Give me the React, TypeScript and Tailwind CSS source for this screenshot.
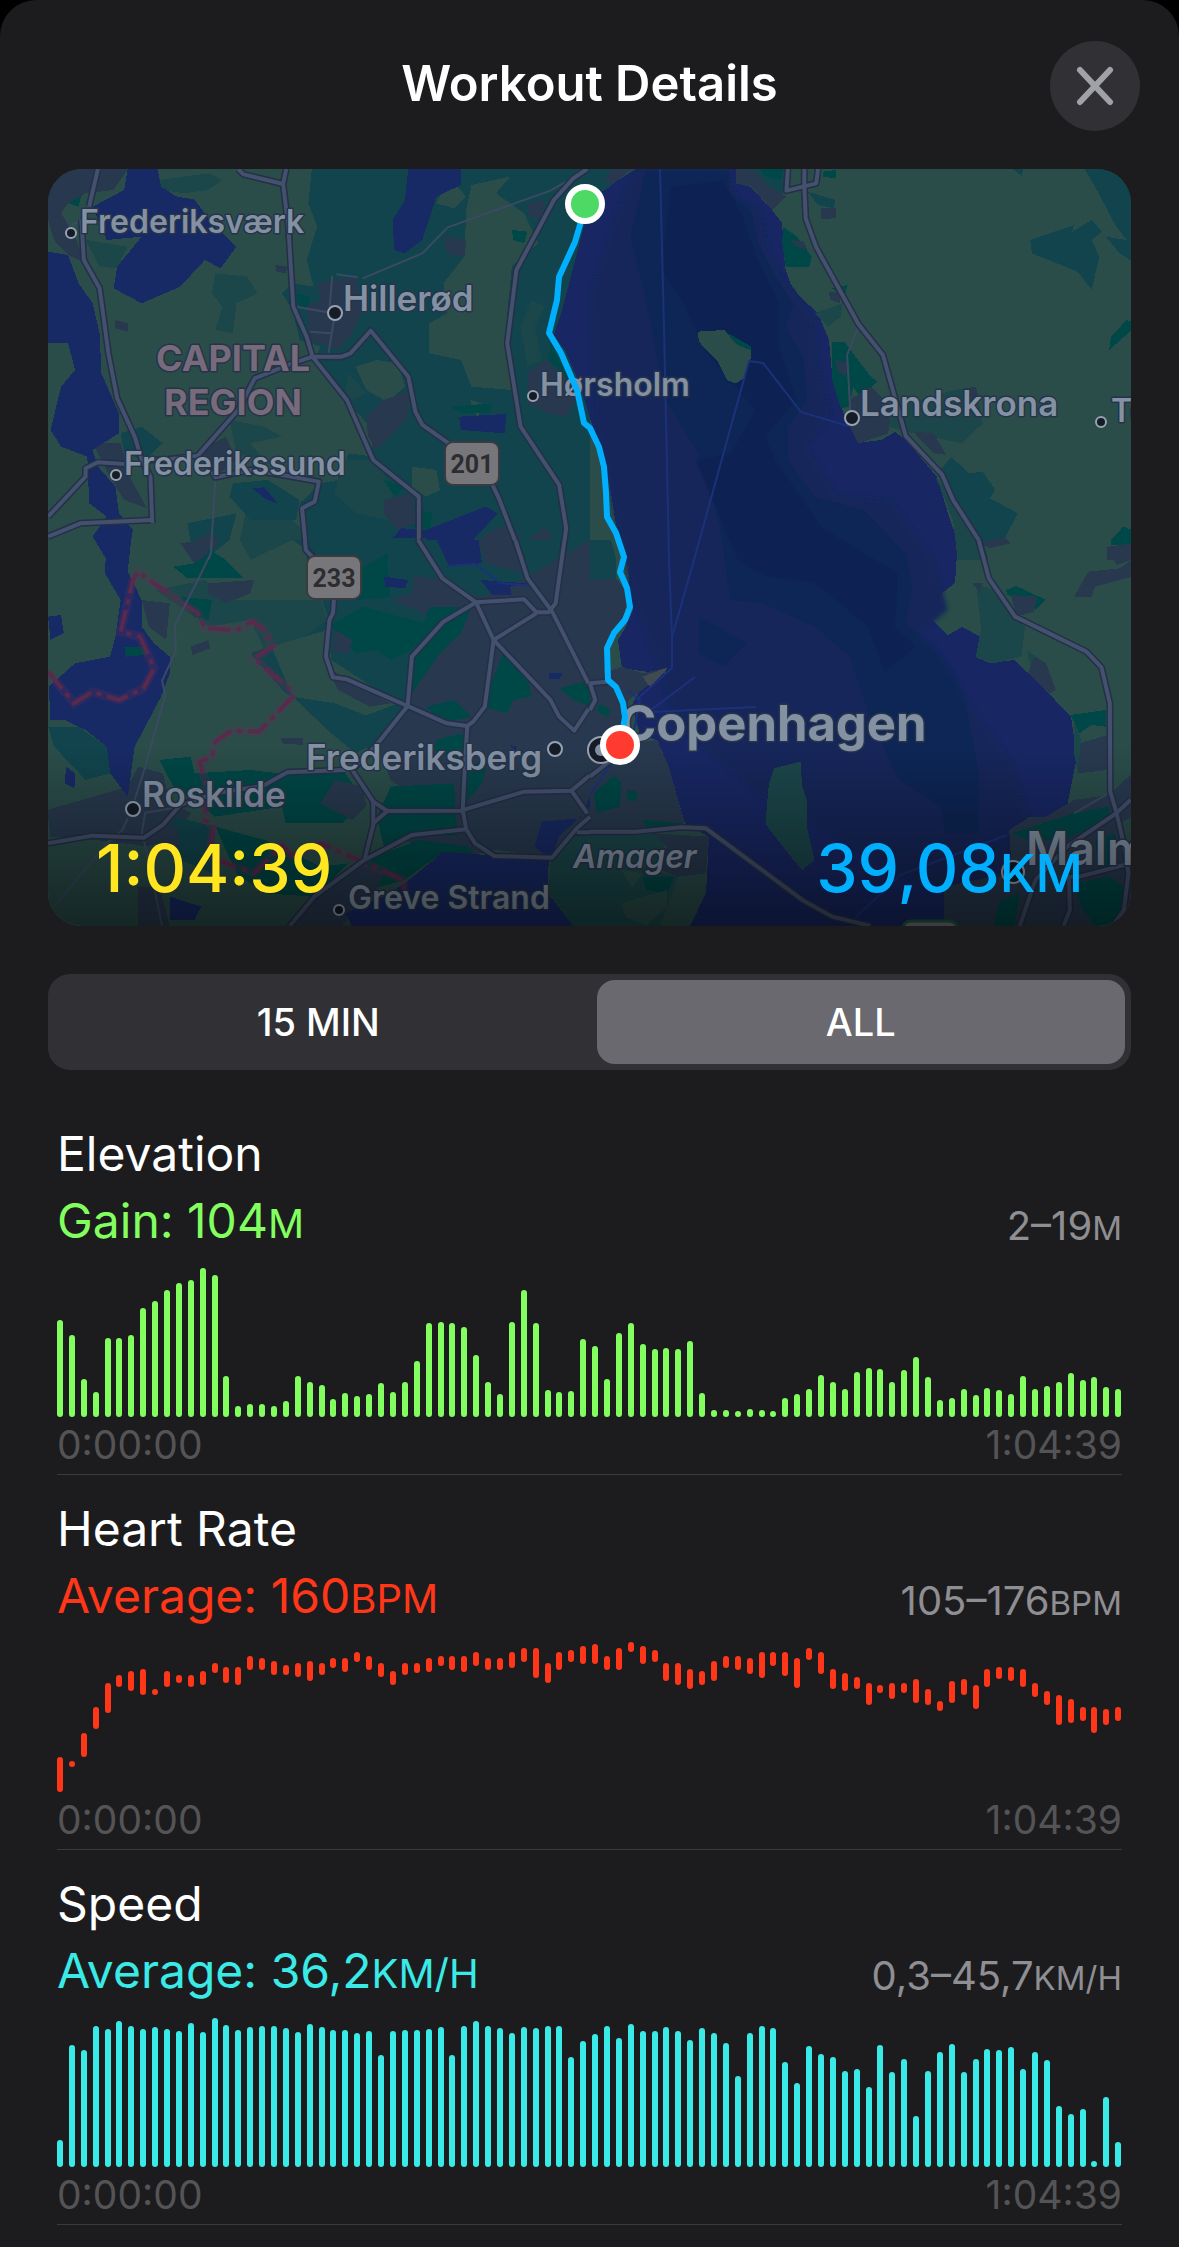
import React, { useState } from "react";

type Range = [offset: number, height: number];

const CHART_HEIGHT = 150;

const fromBase = (heights: number[]): Range[] =>
  heights.map((h) => [CHART_HEIGHT - h, h]);

const elevation = fromBase([
  97, 82, 38, 25, 79, 79, 82, 109, 116, 127, 134, 137, 149, 142, 41, 11, 13, 13, 11, 16,
  41, 35, 32, 18, 24, 21, 23, 34, 25, 35, 56, 94, 95, 94, 90, 62, 35, 23, 95, 127,
  94, 27, 25, 26, 78, 71, 38, 84, 94, 73, 68, 69, 68, 76, 24, 7, 7, 6, 8, 7,
  6, 19, 23, 28, 42, 35, 28, 45, 49, 48, 35, 47, 60, 40, 17, 19, 28, 22, 29, 27,
  23, 41, 28, 31, 35, 44, 37, 40, 30, 28,
]);

const speed = fromBase([
  27, 122, 117, 141, 138, 146, 141, 138, 140, 138, 136, 144, 135, 149, 142, 137, 140, 141, 141, 139,
  135, 143, 140, 137, 137, 134, 136, 112, 136, 137, 137, 138, 140, 112, 141, 146, 141, 139, 134, 140,
  139, 141, 141, 110, 126, 133, 141, 129, 143, 136, 136, 140, 136, 127, 139, 134, 124, 91, 134, 141,
  139, 105, 84, 121, 113, 110, 96, 98, 80, 122, 95, 108, 51, 96, 115, 123, 95, 108, 118, 117,
  120, 98, 115, 107, 61, 53, 58, 6, 70, 25,
]);

const heartRate: Range[] = [
  [115, 35], [119, 6], [91, 24], [65, 22], [41, 30], [33, 12], [29, 20], [27, 26], [47, 6], [29, 16],
  [33, 8], [33, 12], [29, 14], [21, 10], [25, 16], [25, 18], [14, 14], [16, 12], [19, 14], [23, 10],
  [21, 14], [19, 20], [21, 12], [16, 10], [16, 14], [10, 10], [14, 14], [21, 14], [29, 14], [21, 12],
  [21, 10], [16, 14], [14, 10], [14, 14], [14, 16], [10, 14], [16, 12], [16, 12], [10, 16], [6, 14],
  [6, 30], [21, 20], [10, 18], [8, 12], [4, 18], [2, 20], [14, 14], [6, 22], [0, 10], [4, 18],
  [8, 12], [21, 18], [21, 22], [27, 20], [29, 14], [19, 20], [14, 12], [14, 14], [16, 16], [10, 26],
  [10, 14], [10, 24], [16, 30], [6, 12], [10, 22], [27, 20], [31, 18], [35, 12], [41, 22], [43, 8],
  [41, 16], [41, 10], [37, 24], [47, 16], [59, 10], [39, 22], [37, 16], [43, 24], [27, 18], [25, 12],
  [25, 14], [27, 18], [41, 14], [49, 14], [53, 30], [57, 24], [65, 14], [65, 26], [67, 16], [65, 14],
];

/* ------------------------------------------------------------------ map */

const FARM = "#2a4d4a";
const FOREST = "#11444d";
const MIX = "#1b474b";
const PARK = "#004747";
const TOWN = "#28394f";
const LAKE = "#182a66";

type Patch = [fill: string, points: string];

interface Tile {
  x: number;
  y: number;
  patches: Patch[];
  thin: string[];
  roads: string[];
}

const northWest: Tile = {
  x: 40,
  y: 160,
  patches: [
    [FOREST, "775,27 1568,27 1568,1200 780,1200 745,1110 740,1030 800,970 850,960 880,880 950,890 940,800 880,730 830,650 780,600 800,560 740,540 720,450 690,400 720,370 780,380 760,300 790,200 765,130"],
    [MIX, "340,60 480,40 520,60 480,90 410,100 350,90"],
    [MIX, "500,340 590,350 620,400 560,430 550,520 500,510 520,440 490,400"],
    [MIX, "130,240 250,260 230,300 260,330 170,320"],
    [MIX, "540,780 640,800 690,830 600,850 640,900 560,880"],
    [MIX, "590,1040 700,1060 760,1120 780,1200 600,1200 570,1140"],
    [FOREST, "550,970 650,960 740,1020 730,1080 600,1080 540,1010"],
    [FOREST, "23,27 60,30 40,90 23,100"],
    [FOREST, "230,820 290,800 350,850 300,900 240,880"],
    [FOREST, "420,1090 560,1060 540,1140 470,1200 430,1150"],
    [FARM, "1230,75 1340,50 1300,100 1380,160 1420,250 1345,320 1325,540 1345,690 1230,680 1200,600 1110,580 1110,490 1160,460 1150,370 1210,290 1215,150"],
    [FARM, "1150,90 1190,80 1215,110 1180,145 1130,130"],
    [FARM, "900,620 960,600 1020,610 1042,680 990,725 930,690"],
    [FARM, "1060,920 1130,930 1140,990 1100,1010 1060,980"],
    [FARM, "1230,720 1260,730 1250,770 1230,750"],
    [MIX, "1400,420 1440,440 1410,500 1430,600 1390,620 1370,500"],
    [MIX, "860,900 960,900 1010,1000 990,1080 900,1060 840,1000"],
    [MIX, "880,640 930,700 890,720 870,690"],
    [PARK, "85,95 120,100 110,140 80,130"],
    [PARK, "730,400 770,410 765,440 740,440"],
    [PARK, "1345,210 1390,215 1380,250 1350,240"],
    [PARK, "1170,740 1290,730 1280,760 1200,760"],
    [PARK, "1460,530 1500,600 1540,720 1490,640 1450,600"],
    [PARK, "1060,1040 1120,1060 1110,1110 1060,1100"],
    [PARK, "980,960 1040,980 1010,1010"],
    [TOWN, "23,27 250,27 210,90 130,100 80,130 60,160 100,230 130,310 80,285 40,240 23,180"],
    [TOWN, "790,370 900,350 920,450 890,520 850,570 770,540 760,440 800,420"],
    [TOWN, "150,850 230,850 260,960 305,1045 240,1020 200,950"],
    [TOWN, "470,860 530,830 560,900 500,950 460,920"],
    [TOWN, "930,770 980,720 1060,690 1045,780 960,870 935,830"],
    [TOWN, "1150,230 1215,240 1210,290 1160,280"],
    [TOWN, "1390,640 1440,600 1540,700 1500,770 1450,760 1390,730"],
    [TOWN, "980,1020 1065,1000 1070,1090 1020,1110 980,1060"],
    [TOWN, "215,480 250,490 250,515 215,505"],
    [TOWN, "1390,130 1440,120 1430,175 1395,170"],
    [TOWN, "670,315 705,320 700,340 675,335"],
    [TOWN, "1270,1120 1340,1090 1380,1150 1440,1100 1500,1200 1240,1200"],
    [TOWN, "430,1150 480,1120 510,1140 480,1200 430,1200"],
    [LAKE, "250,27 335,27 345,80 390,110 440,118 490,190 560,260 515,325 470,300 400,380 290,430 210,385 220,320 290,230 190,240 150,140 240,90"],
    [LAKE, "1050,27 1200,27 1200,75 1130,110 1090,240 1040,280 1010,270 1005,180 1040,120"],
    [LAKE, "23,275 80,285 110,370 150,430 170,520 175,640 225,760 225,820 150,870 165,920 215,980 225,1060 265,1110 250,1200 190,1200 150,1130 190,1070 140,1030 135,890 60,860 30,810 60,680 100,630 80,550 23,550"],
    [LAKE, "1195,770 1330,762 1325,820 1200,810"],
    [LAKE, "605,985 640,982 680,1033 640,1015"],
    [LAKE, "1005,1135 1030,1105 1100,1110 1270,1040 1305,1060 1235,1140 1265,1200 1135,1200 1100,1135"],
  ],
  thin: [
    "1500,65 1455,92 1162,202 1090,280 920,355",
    "845,343 905,352",
    "833,348 826,440",
    "730,440 820,457",
    "838,480 822,580",
    "770,515 830,520",
    "500,952 487,1180 480,1200",
    "90,195 118,180",
  ],
  roads: [
    "165,27 140,140",
    "118,180 125,300 170,385 195,580 220,715 270,830 290,900 315,950 320,1090",
    "23,1070 130,950 130,925 165,907 240,912",
    "23,1130 115,1090 320,1080",
    "565,27 580,43 693,72",
    "702,27 693,72 708,200 722,440 760,530 777,590 875,720 950,900 1080,1010 1080,1145 1115,1200",
    "777,590 715,612 612,655 565,750 450,887 350,900 290,900",
    "777,590 860,590 885,580 943,512 1050,650 1070,755 1090,795 1165,850",
    "1290,975 1310,1020 1375,1200",
    "1560,27 1520,55 1465,120 1358,330 1332,550 1370,800 1480,975 1500,1105 1488,1200",
    "490,935 500,952 600,930 690,945 795,965 783,1025 747,1045 758,1165 785,1200",
  ],
};

const northEast: Tile = {
  x: 590,
  y: 160,
  patches: [
    [FOREST, "415,27 560,27 555,90 520,150 460,80"],
    [TOWN, "415,27 470,30 500,70 560,110 520,150 460,80 415,70"],
    [PARK, "485,27 550,27 545,60 500,50"],
    [PARK, "665,35 700,30 700,55 665,50"],
    [PARK, "550,200 590,230 632,290 625,320 558,320 548,250"],
    [TOWN, "570,240 610,245 620,270 590,260"],
    [FOREST, "620,95 700,120 695,145 650,135"],
    [TOWN, "660,145 700,145 700,175 657,177"],
    [MIX, "640,460 720,430 715,470 680,500"],
    [TOWN, "680,395 715,395 712,430 685,418"],
    [PARK, "690,385 735,375 725,410"],
    [PARK, "690,545 725,545 800,650 820,665 770,710 750,680 740,740 715,745 690,660"],
    [TOWN, "700,600 735,610 730,650 705,630"],
    [TOWN, "740,720 800,680 860,740 850,820 765,850 735,790"],
    [MIX, "1040,690 1100,680 1120,790 1060,850 900,815 850,800 870,740"],
    [TOWN, "1060,690 1100,680 1110,720 1070,720"],
    [TOWN, "920,815 980,820 1015,885 980,880"],
    [FOREST, "990,940 1030,890 1080,940 1120,935 1155,990 1140,1015 1220,1060 1180,1140 1110,1160 1060,1050"],
    [MIX, "985,950 1030,1010 1110,1140 1125,1200 1048,1200 1035,1080"],
    [TOWN, "1110,1150 1180,1130 1200,1150 1140,1165"],
    [FOREST, "1255,240 1380,195 1375,215 1430,180 1460,215 1430,240 1452,290 1430,390 1390,335 1260,280"],
    [FOREST, "1410,27 1568,27 1568,320 1510,280 1470,230 1530,240 1500,200 1450,100"],
    [FOREST, "1205,27 1235,27 1230,48"],
    [PARK, "1480,570 1485,530 1530,480 1545,485 1545,510"],
    [PARK, "1485,1140 1520,1100 1545,1110 1545,1160 1485,1155"],
    [TOWN, "1475,1160 1545,1155 1545,1200 1475,1200"],
    [FARM, "308,515 385,510 400,530 460,565 460,590 440,655 415,670 390,660 365,605 310,545"],
    [PARK, "385,515 460,560 460,572 420,555"],
    [FOREST, "0,27 120,27 50,85 10,110 0,100"],
    [TOWN, "60,27 120,27 60,75 45,60"],
  ],
  thin: ["765,500 733,585 742,755"],
  roads: [
    "564,27 560,92 645,70 650,27",
    "611,27 611,80 615,175 645,262 765,492 835,585 900,828 1003,943 1035,1020 1108,1140 1125,1200",
  ],
};

const southWest: Tile = {
  x: 40,
  y: 540,
  patches: [
    [FOREST, "600,60 720,0 1568,0 1568,560 1200,560 960,640 830,570 820,520 700,460 600,340 700,300 820,230 800,170"],
    [FARM, "600,60 720,0 760,30 760,170 700,190 640,160"],
    [MIX, "330,150 470,120 560,180 800,180 820,240 740,300 640,330 600,240 480,260"],
    [FARM, "660,320 820,270 830,360 1020,490 920,530 820,500 720,470"],
    [TOWN, "1180,150 1260,170 1390,110 1568,0 1568,950 1460,950 1300,930 1150,960 1000,880 1100,800 1000,720 960,620 1050,500 1060,340 1150,240"],
    [TOWN, "1020,100 1150,120 1230,180 1140,240 1000,180"],
    [TOWN, "1250,0 1360,0 1380,100 1270,70"],
    [PARK, "830,255 920,200 1100,250 1060,330 1000,360 960,330 900,340 850,290"],
    [TOWN, "840,270 890,300 880,340 835,340"],
    [PARK, "1110,200 1230,200 1200,280 1140,340 1060,460 1050,380 1080,290"],
    [PARK, "1320,340 1390,400 1400,470 1350,480 1330,520 1260,500"],
    [PARK, "1100,500 1180,480 1230,530 1150,550"],
    [PARK, "1480,445 1568,420 1568,500 1520,480"],
    [PARK, "1130,600 1200,580 1230,610 1200,660 1120,630"],
    [PARK, "1220,680 1280,650 1260,730 1210,790"],
    [TOWN, "810,370 870,420 1000,490 940,500 850,450"],
    [PARK, "870,110 990,40 1010,170 900,180"],
    [FOREST, "990,60 1070,80 1060,160 1000,180"],
    [PARK, "380,80 440,70 470,20 530,60 580,115 420,115"],
    [TOWN, "480,130 610,120 600,160 530,190 480,160"],
    [TOWN, "400,10 470,0 480,40 440,70"],
    [TOWN, "430,320 480,300 485,325 435,345"],
    [PARK, "400,170 490,180 480,240 440,230"],
    [PARK, "230,290 290,280 310,340 240,350"],
    [TOWN, "290,180 370,190 360,300 310,260"],
    [FOREST, "720,470 840,490 940,530 980,510 970,600 900,640 830,580"],
    [FOREST, "23,560 110,560 190,620 200,700 130,720 40,620"],
    [TOWN, "687,595 750,595 750,615 690,610"],
    [PARK, "340,660 430,650 440,700 600,690 680,700 700,690 870,700 930,790 860,850 700,850 690,800 500,830 380,740"],
    [TOWN, "840,720 920,740 930,800 890,840 800,790"],
    [TOWN, "20,810 250,740 280,680 350,700 370,780 430,820 380,900 300,920 160,900 30,890"],
    [FARM, "23,920 240,910 440,940 760,850 940,850 920,960 780,1070 640,1158 23,1158"],
    [FOREST, "380,830 500,860 490,1000 400,960 370,920"],
    [PARK, "500,860 640,900 800,980 880,970 780,1070 640,1060 560,1000"],
    [PARK, "1000,740 1180,730 1190,890 1060,880 980,920 960,830"],
    [PARK, "930,960 1080,900 1220,920 1240,950 1150,935 1040,1020 870,1070"],
    [TOWN, "770,1080 920,970 980,1000 960,1050 860,1158 700,1158"],
    [TOWN, "280,1040 340,1040 370,1158 280,1158"],
    [LAKE, "370,1070 460,1100 440,1140 370,1140"],
    [TOWN, "340,880 390,860 400,920 350,920"],
    [LAKE, "190,0 260,0 250,95 290,180 290,260 325,310 370,350 370,400 345,470 310,540 270,620 250,770 200,700 190,620 130,570 70,540 30,540 25,440 100,370 200,350 215,290 230,180 185,100"],
    [PARK, "240,320 290,320 300,345 245,350"],
    [LAKE, "23,230 60,225 68,280 30,300"],
    [LAKE, "75,680 100,700 98,745 70,730"],
    [LAKE, "980,110 1050,120 1040,145 985,140"],
    [LAKE, "1130,0 1250,0 1260,70 1165,75"],
    [LAKE, "1255,120 1390,130 1340,140 1345,165 1290,165"],
    [LAKE, "1450,400 1492,398 1480,418 1452,418"],
    [LAKE, "1340,615 1360,620 1355,635"],
    [LAKE, "1430,845 1540,835 1568,770 1568,800 1480,890 1455,960 1410,920"],
    [LAKE, "1040,1030 1150,935 1450,960 1448,1060 1520,1158 890,1158 870,1120 980,1070"],
    [MIX, "1500,900 1568,880 1568,1158 1520,1158 1450,1060 1455,960"],
  ],
  thin: [
    "490,0 487,40 450,120 385,255 387,335 348,422 357,465 300,680 270,780",
    "250,835 235,870 190,910 40,1100",
    "400,800 300,818 290,880 305,940 348,1158",
  ],
  roads: [
    "23,910 150,887 297,893 350,855 400,795 500,760 635,738 705,697 870,690",
    "755,0 758,30 780,55",
    "838,180 835,220 825,240 815,350 835,412 875,418 1048,498 1160,550 1218,558 1235,545 1268,500 1293,300 1243,187 1147,115 1078,0",
    "1048,498 1060,350 1150,245 1243,187 1380,178 1415,217 1450,217 1470,190 1495,0",
    "1355,0 1390,115 1460,215 1568,440",
    "1293,300 1415,220",
    "1293,300 1455,480 1480,530 1523,572 1568,500",
    "1048,498 955,620 890,690 950,785 990,813 1200,812 1380,755 1515,752 1568,705",
    "950,785 950,855 925,960 782,1070 712,1158",
    "950,850 990,813",
    "1218,558 1210,700 1205,810 1215,868 1240,910 1295,948 1460,953 1530,865 1568,830",
    "925,960 1060,885 1215,868",
    "1515,752 1560,820",
    "1530,877 1568,877",
  ],
};

const southEast: Tile = {
  x: 590,
  y: 540,
  patches: [
    [FOREST, "0,0 60,0 75,60 75,115 0,120"],
    [TOWN, "0,120 75,115 105,160 100,220 50,300 40,400 90,380 150,400 220,383 150,450 110,480 100,560 130,610 190,600 225,680 250,780 270,850 0,880"],
    ["#3f4b50", "150,410 220,383 215,395 170,440"],
    [PARK, "25,490 60,510 50,530 20,515"],
    [PARK, "10,760 70,705 90,730 85,800 20,820"],
    [PARK, "105,750 135,755 135,785 105,780"],
    [PARK, "150,840 265,850 250,865 160,860"],
    [MIX, "0,880 180,880 220,900 180,990 250,1010 200,1158 0,1158"],
    [PARK, "150,1010 240,1010 220,1060 160,1050"],
    [FARM, "90,1090 220,1050 220,1100 160,1158 100,1130"],
    [FARM, "90,990 150,1000 120,1045"],
    [TOWN, "180,880 340,890 330,1000 250,1010 180,980 220,920"],
    [MIX, "525,685 600,665 605,740 618,780 618,860 640,960 605,990 580,960 520,880 500,850 510,730"],
    [MIX, "1048,0 1100,0 1125,60 1060,60 1045,40"],
    [MIX, "1100,130 1150,150 1240,260 1230,350 1150,370 1100,350 1115,265"],
    [PARK, "1185,150 1215,138 1300,180 1270,210 1230,180 1190,165"],
    [TOWN, "1200,165 1275,170 1265,215 1215,230"],
    [TOWN, "1090,130 1120,130 1110,155"],
    [TOWN, "1380,170 1420,95 1510,85 1545,60 1545,110 1440,140 1430,170"],
    [TOWN, "1480,20 1545,10 1545,60 1500,75"],
    [MIX, "1245,330 1300,370 1260,400"],
    [TOWN, "1265,350 1300,370 1328,450 1310,460 1250,400"],
    [PARK, "1370,525 1470,510 1470,560 1430,555 1395,580"],
    [TOWN, "1395,610 1475,585 1475,690 1390,700"],
    [MIX, "1380,540 1400,600 1390,700 1380,640"],
    [TOWN, "1300,830 1380,780 1480,765 1545,700 1545,1158 1010,1158 1010,1040 1170,1010 1200,950 1195,870 1255,830"],
    [PARK, "1200,880 1380,820 1480,800 1480,840 1350,900 1250,900"],
    [PARK, "1170,1080 1225,1060 1210,1158 1150,1158"],
    [PARK, "1380,1030 1480,1010 1520,1040 1510,1158 1440,1158 1400,1100"],
    [PARK, "1440,900 1500,880 1500,980 1450,990"],
    [FARM, "1510,850 1545,830 1545,940"],
  ],
  thin: ["1475,762 1380,820"],
  roads: [
    "1108,0 1137,115 1212,230 1415,335 1458,382 1482,490 1483,755 1500,815 1520,905 1535,1000 1522,1110 1490,1158",
    "1541,780 1500,820 1360,920 1270,1020 1225,1158",
    "1541,970 1395,1010 1365,1010 1368,1110 1350,1158",
    "0,875 130,875 260,862 330,865 605,1080 690,1130 800,1158",
    "0,430 50,425",
    "0,430 15,480 0,510",
    "0,710 60,660",
  ],
};

const regionBorder =
  "23,395 97,490 150,455 225,480 295,445 325,385 285,290 230,275 265,120 278,95 400,185 450,220 470,265 560,270 605,245 635,265 665,320 610,355 715,450 720,470 625,575 545,572 500,605 490,650 455,665 475,740 470,840 495,860 480,950 610,1000 690,915 720,950 800,910 1035,1020 1040,1050";

const route =
  "583,210 580,225 575,242 559,277 557,300 549,333 561,353 577,390 584,423 590,428 599,447 604,467 606,493 607,517 616,533 624,557 620,572 627,588 630,607 625,620 614,633 607,648 608,680 616,687 623,703 625,717 621,740";

const sound =
  "636,169 610,185 592,200 583,230 570,280 562,310 554,335 566,352 580,385 592,425 606,455 612,500 616,525 628,550 630,600 633,610 625,628 618,640 620,655 622,668 648,672 667,668 640,690 632,705 640,735 657,740 669,767 678,800 685,823 709,837 706,893 690,926 944,926 944,887 1000,875 1009,830 1028,817 1046,817 1067,807 1077,757 1071,717 1039,683 1014,660 990,663 976,657 981,637 962,627 948,635 930,618 934,600 955,583 958,540 951,523 937,477 906,440 895,432 881,440 858,443 848,423 841,407 832,373 829,340 818,313 800,297 790,283 785,267 782,223 772,210 751,187 736,183 736,169";

const tileScale = "scale(0.3508 0.3333)";

const place = (t: { x: number; y: number }) => `translate(${t.x} ${t.y}) ${tileScale}`;

function Land({ tile }: { tile: Tile }) {
  return (
    <g transform={place(tile)}>
      {tile.patches.map(([fill, points], i) => (
        <polygon key={i} points={points} fill={fill} />
      ))}
    </g>
  );
}

function Roads({ tile }: { tile: Tile }) {
  return (
    <g transform={place(tile)} fill="none" strokeLinejoin="round">
      {tile.thin.map((p) => (
        <polyline key={p} points={p} stroke="#3b4a62" strokeWidth={2} vectorEffect="non-scaling-stroke" />
      ))}
      {tile.roads.map((p) => (
        <polyline key={p} points={p} stroke="#252f46" strokeWidth={7} vectorEffect="non-scaling-stroke" />
      ))}
      {tile.roads.map((p) => (
        <polyline key={p} points={p} stroke="#43516e" strokeWidth={4} vectorEffect="non-scaling-stroke" />
      ))}
    </g>
  );
}

interface Place {
  name: string;
  x: number;
  y: number;
  size: number;
  dot?: [number, number, number];
}

const places: Place[] = [
  { name: "Frederiksværk", x: 80, y: 233, size: 32, dot: [71, 233, 5] },
  { name: "Hillerød", x: 343, y: 311, size: 35, dot: [335, 313, 7] },
  { name: "Hørsholm", x: 540, y: 396, size: 32, dot: [533, 396, 5] },
  { name: "Frederikssund", x: 124, y: 475, size: 32, dot: [116, 475, 5] },
  { name: "Landskrona", x: 860, y: 416, size: 35, dot: [852, 418, 7] },
  { name: "To", x: 1111, y: 422, size: 32, dot: [1101, 422, 5] },
  { name: "Frederiksberg", x: 306, y: 770, size: 35, dot: [555, 749, 7] },
  { name: "Roskilde", x: 142, y: 807, size: 35, dot: [133, 809, 7] },
  { name: "Greve Strand", x: 348, y: 909, size: 32, dot: [339, 910, 5] },
];

function Shield({ x, y, label }: { x: number; y: number; label: string }) {
  return (
    <g>
      <rect x={x} y={y} width={56} height={45} rx={9} fill="#3a3b3f" />
      <rect x={x + 2} y={y + 2} width={52} height={41} rx={7} fill="#77777b" />
      <text x={x + 28} y={y + 32} textAnchor="middle" className="fill-[#2c2d31] font-['Roboto'] text-[25px] font-bold">
        {label}
      </text>
    </g>
  );
}

function RouteMap() {
  return (
    <svg viewBox="48 169 1083 757" className="block w-full" role="img" aria-label="Route map from the north coast to Copenhagen">
      <defs>
        <linearGradient id="fade" x1="0" y1="0" x2="0" y2="1">
          <stop offset="0" stopColor="#000" stopOpacity="0" />
          <stop offset="1" stopColor="#000" stopOpacity="0.5" />
        </linearGradient>
        <filter id="soft" x="-10%" y="-10%" width="120%" height="120%">
          <feGaussianBlur stdDeviation="6" />
        </filter>
      </defs>
      <rect x="48" y="169" width="1083" height="757" fill={FARM} />
      <g shapeRendering="crispEdges">
        <Land tile={northWest} />
        <Land tile={southWest} />
        <polygon points={sound} fill="#182764" />
        <g transform={place({ x: 590, y: 160 })} filter="url(#soft)">
          <polygon fill="#17255a" points="125,27 400,27 420,120 490,150 510,280 560,370 640,480 650,600 690,760 620,860 700,1000 860,1020 980,1200 1020,1350 940,1420 1030,1560 1200,1800 1260,2000 1180,2150 960,2180 480,1900 250,1700 120,1300 10,770 0,400 60,200" />
          <polygon fill="#0c2756" points="160,27 390,27 400,110 455,130 480,250 530,350 580,430 560,500 610,600 620,720 565,800 565,900 640,1010 780,1050 900,1180 920,1280 900,1390 990,1470 1060,1580 1110,1840 1110,2020 1010,2020 1000,1940 880,1860 800,1680 740,1490 640,1400 490,1330 400,1320 370,1100 320,900 215,720 155,400 115,230" />
          <polygon fill="#0a2153" points="230,80 380,60 440,180 480,300 540,430 540,560 590,720 500,830 530,900 660,1100 880,1240 870,1400 930,1460 840,1540 790,1400 640,1270 500,1250 420,1200 300,900 400,880 470,750 330,580 260,420 200,330" />
          <polygon fill="#0c2756" points="310,1370 450,1450 380,1520 310,1480" />
        </g>
        <Land tile={northEast} />
        <Land tile={southEast} />
      </g>

      <g fill="none" stroke="#1b3279" strokeWidth="2">
        <polyline points="660,169 664,327 669,560 672,637 672,668 636,700" />
        <polyline points="672,637 694,560 749,361 763,363 801,412 848,426" />
        <polyline points="695,677 651,710" />
        <polyline points="756,707 653,712" />
        <polyline points="853,920 900,875 1007,835" />
        <polyline points="627,690 640,700 634,730 590,795" />
        <polyline points="447,566 475,564 500,583 530,586" />
      </g>

      <g transform={place(southWest)} fill="none">
        <polyline points={regionBorder} stroke="#6b2a55" strokeOpacity="0.25" strokeWidth={9} vectorEffect="non-scaling-stroke" />
        <polyline points={regionBorder} stroke="#5a2a4c" strokeWidth={4} strokeDasharray="22 6 5 6" vectorEffect="non-scaling-stroke" />
      </g>

      <Roads tile={northWest} />
      <Roads tile={northEast} />
      <Roads tile={southWest} />
      <Roads tile={southEast} />

      <Shield x={444} y={441} label="201" />
      <Shield x={306} y={555} label="233" />
      <rect x={902} y={921} width={56} height={45} rx={9} fill="#77777b" stroke="#1f5a44" strokeWidth={3} />

      <g
        className="fill-[#8391a3] font-['Inter'] font-semibold"
        stroke="#26344a"
        strokeWidth={3}
        strokeLinejoin="round"
        paintOrder="stroke"
      >
        {places.map((p) => (
          <text key={p.name} x={p.x} y={p.y} fontSize={p.size}>
            {p.name}
          </text>
        ))}
        <text x={620} y={741} fontSize={49} fontWeight={700}>
          Copenhagen
        </text>
        <text x={1026} y={865} fontSize={46}>
          Malmö
        </text>
        <text x={573} y={868} fontSize={32} fontStyle="italic">
          Amager
        </text>
        <g className="fill-[#776a7b] font-bold" textAnchor="middle">
          <text x={233} y={371} fontSize={36}>
            CAPITAL
          </text>
          <text x={233} y={415} fontSize={36}>
            REGION
          </text>
        </g>
      </g>
      <g fill="#151c28" stroke="#97a3b2" strokeWidth={2}>
        {places.map((p) => p.dot && <circle key={p.name} cx={p.dot[0]} cy={p.dot[1]} r={p.dot[2]} />)}
        <circle cx={601} cy={750} r={13} />
        <circle cx={1013} cy={872} r={11} />
      </g>
      <circle cx={601} cy={750} r={6} fill="#8391a3" />

      <rect x="48" y="746" width="1083" height="180" fill="url(#fade)" />

      <polyline points={route} fill="none" stroke="#00b0ff" strokeWidth={6} strokeLinejoin="round" strokeLinecap="round" />
      <circle cx={585} cy={204} r={17} fill="#4cd964" stroke="#fff" strokeWidth={6} />
      <circle cx={620} cy={745} r={17} fill="#ff3b30" stroke="#fff" strokeWidth={6} />
    </svg>
  );
}

/* ------------------------------------------------------------- sections */

interface MetricProps {
  title: string;
  summary: string;
  range: string;
  unit: string;
  textColor: string;
  barColor: string;
  bars: Range[];
}

function Metric({ title, summary, range, unit, textColor, barColor, bars }: MetricProps) {
  return (
    <section className="border-b border-[#3a3a3c] pt-5 pb-[6px]">
      <h2 className="text-[48px] leading-[67px]">{title}</h2>
      <div className="flex items-end justify-between">
        <p className={`text-[48px] leading-[67px] ${textColor}`}>
          {summary}
          <span className="text-[40px] leading-none">{unit}</span>
        </p>
        <p className="text-[40px] leading-[56px] text-[#8e8e93]">
          {range}
          <span className="text-[33px] leading-none">{unit}</span>
        </p>
      </div>
      <div className="mt-[13px] flex h-[150px] items-start justify-between" role="img" aria-label={`${title} chart`}>
        {bars.map(([offset, height], i) => (
          <span
            key={i}
            className={`w-[6px] rounded-full ${barColor}`}
            style={{ marginTop: offset, height }}
          />
        ))}
      </div>
      <div className="mt-1 flex justify-between text-[39px] leading-[47px] text-[#545456]">
        <span>0:00:00</span>
        <span>1:04:39</span>
      </div>
    </section>
  );
}

const spans = ["15 MIN", "ALL"];

export default function App() {
  const [span, setSpan] = useState("ALL");

  return (
    <div className="min-h-screen bg-black font-['Inter',sans-serif] text-white">
      <main className="min-h-screen rounded-t-[36px] bg-[#1c1c1e]">
        <header className="grid grid-cols-[90px_1fr_90px] items-start px-[39px] pt-[41px] pb-[38px]">
          <h1 className="col-start-2 text-center text-[49px] leading-[86px] font-semibold">Workout Details</h1>
          <button
            type="button"
            aria-label="Close"
            className="flex size-[90px] items-center justify-center rounded-full bg-[#313135]"
          >
            <svg viewBox="0 0 40 40" className="size-10" fill="none" stroke="#a1a1a8" strokeWidth="6" strokeLinecap="round">
              <path d="M5 4 35 36M35 4 5 36" />
            </svg>
          </button>
        </header>

        <div className="px-12">
          <div className="relative overflow-hidden rounded-[34px]">
            <RouteMap />
            <div className="absolute inset-x-0 bottom-0 flex items-baseline justify-between px-12 pb-[18px] text-[66px] leading-[80px] font-medium">
              <span className="text-[#ffe620]">1:04:39</span>
              <span className="text-[#00b0ff]">
                39,08<span className="text-[52px] leading-none">KM</span>
              </span>
            </div>
          </div>

          <div className="mt-12 grid h-24 grid-cols-2 gap-[14px] rounded-[22px] bg-[#313135] p-[6px]" role="group" aria-label="Time span">
            {spans.map((s) => (
              <button
                key={s}
                type="button"
                aria-pressed={span === s}
                onClick={() => setSpan(s)}
                className={`rounded-[18px] text-[38px] font-medium ${span === s ? "bg-[#6a696f]" : ""}`}
              >
                {s}
              </button>
            ))}
          </div>
        </div>

        <div className="mt-[30px] px-[57px]">
          <Metric
            title="Elevation"
            summary="Gain: 104"
            range="2–19"
            unit="M"
            textColor="text-[#82ff5f]"
            barColor="bg-[#82ff5f]"
            bars={elevation}
          />
          <Metric
            title="Heart Rate"
            summary="Average: 160"
            range="105–176"
            unit="BPM"
            textColor="text-[#ff3718]"
            barColor="bg-[#ff3718]"
            bars={heartRate}
          />
          <Metric
            title="Speed"
            summary="Average: 36,2"
            range="0,3–45,7"
            unit="KM/H"
            textColor="text-[#3aeae6]"
            barColor="bg-[#3aeae6]"
            bars={speed}
          />
        </div>
      </main>
    </div>
  );
}
